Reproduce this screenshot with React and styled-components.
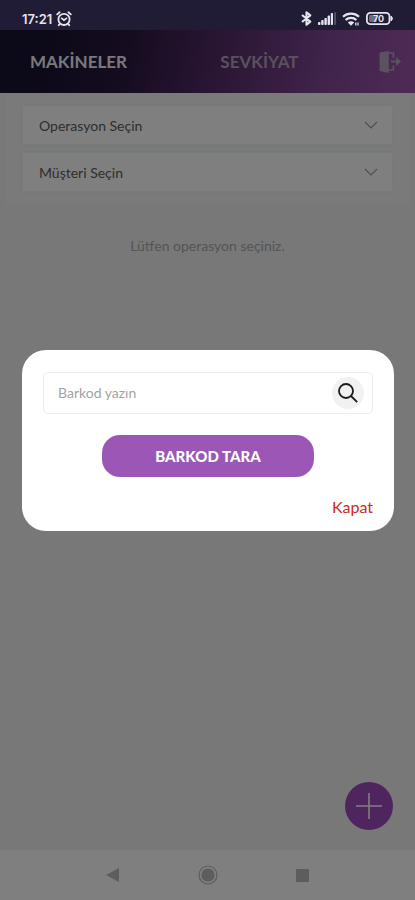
import React, { useState } from 'react'
import styled, { createGlobalStyle } from 'styled-components';

const GlobalStyle = createGlobalStyle`
  * { box-sizing: border-box; }
  body { margin: 0; background: #f0f0f0; }
  button, input, select {
    font-family: inherit;
    border: 0;
    margin: 0;
    padding: 0;
    background: none;
  }
  button { cursor: pointer; }
  svg { display: block; }
`;

const Screen = styled.div`
  min-height: 100vh;
  display: flex;
  flex-direction: column;
  position: relative;
  background: #f0f0f0;
  font-family: Lato, 'Open Sans', sans-serif;
`;

const StatusBar = styled.header`
  height: 30px;
  padding: 7px 22px 0;
  display: flex;
  justify-content: space-between;
  align-items: center;
  position: relative;
  z-index: 3;
  background: #211c36;
  color: #e6e4ee;
`;

const StatusGroup = styled.div`
  display: flex;
  align-items: center;
  gap: ${({ $gap }) => $gap}px;
`;

const Clock = styled.time`
  font-family: Inter, sans-serif;
  font-size: 13px;
  line-height: 16px;
  font-weight: 600;
`;

const TopBar = styled.nav`
  height: 63px;
  padding: 0 14px 0 30px;
  display: grid;
  grid-template-columns: 6fr 5fr auto;
  align-items: center;
  background: linear-gradient(100deg, #181230 8%, #2a183e 30%, #522c66 52%, #844a98 80%, #9c56aa 100%);
`;

const Tab = styled.button`
  height: 100%;
  text-align: left;
  font-size: 17px;
  font-weight: 700;
  color: ${({ $active }) => ($active ? '#f2f0f4' : '#b4a2be')};
`;

const LogoutButton = styled.button`
  color: #b8a2c2;
`;

const Filters = styled.section`
  margin: 0 5px;
  padding: 12px 17px 13px;
  display: flex;
  flex-direction: column;
  gap: 7px;
  background: #f5f5f5;
`;

const SelectBox = styled.div`
  display: grid;
  align-items: center;
  background: #fff;
  border: 1px solid #f3f5f6;
  box-shadow: 0 0 4px #e6ebed;

  > * { grid-area: 1 / 1; }
  > svg { justify-self: end; margin-right: 14px; pointer-events: none; }
`;

const Select = styled.select`
  width: 100%;
  height: 38px;
  padding: 0 16px;
  appearance: none;
  font-size: 14px;
  color: #5c5c5c;
`;

const Main = styled.main`
  flex: 1;
  position: relative;
`;

const EmptyText = styled.p`
  margin: 30px 0 0;
  text-align: center;
  font-size: 14px;
  line-height: 22px;
  color: #aaa;
`;

const AddButton = styled.button`
  position: absolute;
  right: 22px;
  bottom: 20px;
  width: 48px;
  height: 48px;
  display: grid;
  place-items: center;
  border-radius: 50%;
  background: #9e4bc0;
  color: #fff;
`;

const SystemNav = styled.footer`
  height: 50px;
  padding: 0 102px;
  display: flex;
  justify-content: space-between;
  align-items: center;
  background: #fff;
  color: #bababa;
`;

const Backdrop = styled.div`
  position: absolute;
  inset: 30px 0 0;
  z-index: 2;
  padding: 0 21px 50px 22px;
  display: flex;
  align-items: center;
  background: rgba(0, 0, 0, 0.5);
`;

const Dialog = styled.div`
  flex: 1;
  padding: 22px 21px 14px;
  display: flex;
  flex-direction: column;
  border-radius: 24px;
  background: #fff;
`;

const SearchField = styled.form`
  height: 42px;
  padding: 0 8px 0 14px;
  display: flex;
  align-items: center;
  border: 1px solid #ececec;
  border-radius: 5px;
`;

const SearchInput = styled.input`
  flex: 1;
  min-width: 0;
  height: 100%;
  outline: none;
  font-size: 14px;
  color: #333;

  &::placeholder { color: #a3a3a3; opacity: 1; }
`;

const SearchButton = styled.button`
  width: 32px;
  height: 32px;
  display: grid;
  place-items: center;
  border-radius: 50%;
  background: #f1f1f1;
  color: #1c1c1c;
`;

const ScanButton = styled.button`
  width: 64%;
  height: 42px;
  margin: 21px auto 20px;
  border-radius: 18px;
  background: #9b56b6;
  color: #fff;
  font-size: 15px;
  font-weight: 900;
`;

const CloseButton = styled.button`
  align-self: flex-end;
  font-size: 16px;
  line-height: 20px;
  color: #c92a2a;
`;

const AlarmIcon = () => (
  <svg width="16" height="16" viewBox="0 0 16 16" fill="none" stroke="currentColor" strokeWidth="1.8" strokeLinecap="round">
    <circle cx="8" cy="8.4" r="5.6" />
    <path d="M5.8 7.4 L8 9.2 L10.4 7.4 M1.2 3.4 L3.6 1.3 M14.8 3.4 L12.4 1.3 M3.8 13 L2.8 14.2 M12.2 13 L13.2 14.2" />
  </svg>
)

const BluetoothIcon = () => (
  <svg width="11" height="15" viewBox="0 0 11 15" fill="none" stroke="currentColor" strokeWidth="2.1" strokeLinejoin="round">
    <path d="M1 4 L9.3 10.6 L5.5 13.8 V1.2 L9.3 4.4 L1 11" />
  </svg>
)

const SignalIcon = () => (
  <svg width="18" height="13" viewBox="0 0 18 13" fill="currentColor">
    <rect x="0" y="10" width="2.4" height="3" rx="0.8" />
    <rect x="3.2" y="8" width="2.4" height="5" rx="0.8" />
    <rect x="6.4" y="6" width="2.4" height="7" rx="0.8" />
    <rect x="9.6" y="3.6" width="2.4" height="9.4" rx="0.8" />
    <rect x="12.8" y="1" width="2.2" height="12" rx="0.8" />
    <rect x="16.4" y="0" width="1.4" height="13" rx="0.7" opacity="0.35" />
  </svg>
)

const WifiIcon = () => (
  <svg width="18" height="14" viewBox="0 0 18 14" fill="none" stroke="currentColor" strokeWidth="2.2">
    <path d="M1 4.8 C5.4 0.6 12.6 0.6 17 4.8 M3.6 8 C6.6 5.2 11.4 5.2 14.4 8" />
    <path d="M5.8 10.6 C7.6 8.8 10.4 8.8 12.2 10.6 L9 13.8 Z" fill="currentColor" stroke="none" />
    <path d="M13.8 10.4 V13.6 M16 10.4 V13.6" strokeWidth="1.3" />
  </svg>
)

const BatteryIcon = () => (
  <svg width="27" height="13" viewBox="0 0 27 13" fill="none" stroke="currentColor">
    <rect x="0.9" y="0.9" width="22.6" height="11.2" rx="3.4" strokeWidth="1.8" />
    <rect x="3" y="3" width="8" height="7" rx="1.4" fill="currentColor" stroke="none" opacity="0.4" />
    <path d="M25 4.2 C26.8 4.8 26.8 8.2 25 8.8 Z" fill="currentColor" />
    <text x="12.5" y="9.7" textAnchor="middle" fontFamily="Inter, sans-serif" fontSize="9" fontWeight="700" fill="currentColor" stroke="none">70</text>
  </svg>
)

const LogoutIcon = () => (
  <svg width="22" height="22" viewBox="0 0 22 22" fill="currentColor">
    <path d="M0.6 1.4 L9.8 0 V22 L0.6 20 Z" />
    <path d="M9 2 H14.4 V7 M14.4 14.4 V19 H9" fill="none" stroke="currentColor" strokeWidth="1.6" />
    <path d="M12 9.6 H17.2 V6 L22 10.6 L17.2 15.2 V11.6 H12 Z" />
  </svg>
)

const ChevronIcon = () => (
  <svg width="14" height="8" viewBox="0 0 14 8" fill="none" stroke="#9c9c9c" strokeWidth="1.2">
    <path d="M1 1 L7 7 L13 1" />
  </svg>
)

const PlusIcon = () => (
  <svg width="26" height="26" viewBox="0 0 26 26" stroke="currentColor" strokeWidth="1.6">
    <path d="M13 0 V26 M0 13 H26" />
  </svg>
)

const SearchIcon = () => (
  <svg width="20" height="20" viewBox="0 0 20 20" fill="none" stroke="currentColor" strokeWidth="1.8">
    <circle cx="8" cy="8" r="7" />
    <path d="M13 13 L19.2 19.2" />
  </svg>
)

const App = () => {
  const [tab, setTab] = useState('machines')
  const [open, setOpen] = useState(true)
  const [barcode, setBarcode] = useState('')

  return (
    <>
      <GlobalStyle />
      <Screen>
        <StatusBar>
          <StatusGroup $gap={4}>
            <Clock>17:21</Clock>
            <AlarmIcon />
          </StatusGroup>
          <StatusGroup $gap={6}>
            <BluetoothIcon />
            <SignalIcon />
            <WifiIcon />
            <BatteryIcon />
          </StatusGroup>
        </StatusBar>

        <TopBar>
          <Tab $active={tab === 'machines'} onClick={() => setTab('machines')}>MAKİNELER</Tab>
          <Tab $active={tab === 'shipping'} onClick={() => setTab('shipping')}>SEVKİYAT</Tab>
          <LogoutButton aria-label="Çıkış"><LogoutIcon /></LogoutButton>
        </TopBar>

        <Filters>
          <SelectBox>
            <Select aria-label="Operasyon">
              <option>Operasyon Seçin</option>
            </Select>
            <ChevronIcon />
          </SelectBox>
          <SelectBox>
            <Select aria-label="Müşteri">
              <option>Müşteri Seçin</option>
            </Select>
            <ChevronIcon />
          </SelectBox>
        </Filters>

        <Main>
          <EmptyText>Lütfen operasyon seçiniz.</EmptyText>
          <AddButton aria-label="Ekle" onClick={() => setOpen(true)}><PlusIcon /></AddButton>
        </Main>

        <SystemNav>
          <svg width="20" height="20" viewBox="0 0 20 20" fill="currentColor">
            <path d="M4 10 L17 3 V17 Z" />
          </svg>
          <svg width="20" height="20" viewBox="0 0 20 20" fill="currentColor">
            <circle cx="10" cy="10" r="6.6" />
            <circle cx="10" cy="10" r="9" fill="none" stroke="currentColor" strokeWidth="1.2" />
          </svg>
          <svg width="20" height="20" viewBox="0 0 20 20" fill="currentColor">
            <rect x="3" y="4" width="13" height="13" />
          </svg>
        </SystemNav>

        {open && (
          <Backdrop>
            <Dialog role="dialog" aria-modal="true" aria-label="Barkod">
              <SearchField onSubmit={(e) => e.preventDefault()}>
                <SearchInput
                  aria-label="Barkod"
                  placeholder="Barkod yazın"
                  value={barcode}
                  onChange={(e) => setBarcode(e.target.value)}
                />
                <SearchButton type="submit" aria-label="Ara"><SearchIcon /></SearchButton>
              </SearchField>
              <ScanButton>BARKOD TARA</ScanButton>
              <CloseButton onClick={() => setOpen(false)}>Kapat</CloseButton>
            </Dialog>
          </Backdrop>
        )}
      </Screen>
    </>
  )
}

export default App
